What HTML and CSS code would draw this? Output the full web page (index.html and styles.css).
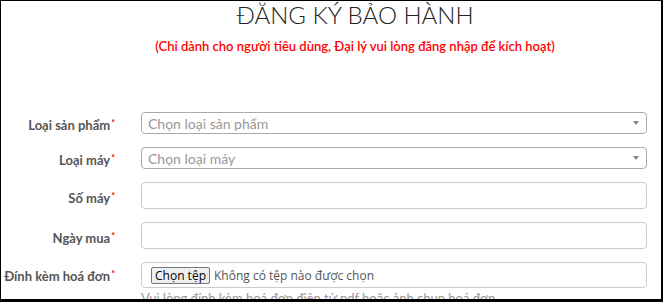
FILE: index.html
```html
<!DOCTYPE html>
<html lang="vi">
<head>
    <meta charset="UTF-8">
    <meta name="viewport" content="width=device-width, initial-scale=1.0">
    <title>Đăng ký bảo hành</title>
    <link rel="stylesheet" href="styles.css">
</head>
<body>
    <div class="frame">
        <!-- Tiêu đề -->
        <div class="header">
            <h1>ĐĂNG KÝ BẢO HÀNH</h1>
            <p class="note">(Chỉ dành cho người tiêu dùng, Đại lý vui lòng đăng nhập để kích hoạt)</p>
        </div>

        <!-- Form đăng ký -->
        <form class="warranty">
            <label class="field-label">Loại sản phẩm<span class="req">*</span></label>
            <div class="select-box">
                <span class="placeholder">Chọn loại sản phẩm</span>
                <span class="arrow"></span>
            </div>

            <label class="field-label">Loại máy<span class="req">*</span></label>
            <div class="select-box">
                <span class="placeholder">Chọn loại máy</span>
                <span class="arrow"></span>
            </div>

            <label class="field-label">Số máy<span class="req">*</span></label>
            <input type="text" class="text-input">

            <label class="field-label">Ngày mua<span class="req">*</span></label>
            <input type="text" class="text-input">

            <label class="field-label top">Đính kèm hoá đơn<span class="req">*</span></label>
            <div class="file-field">
                <div class="file-box">
                    <span class="file-btn">Chọn tệp</span>
                    <span class="file-name">Không có tệp nào được chọn</span>
                </div>
                <p class="help">Vui lòng đính kèm hoá đơn điện tử pdf hoặc ảnh chụp hoá đơn</p>
            </div>
        </form>
    </div>
</body>
</html>
```

FILE: styles.css
```css
body {
    margin: 0;
    padding: 0;
    background-color: #fff;
    font-family: Lato, "Noto Sans", sans-serif;
}
.frame {
    box-sizing: border-box;
    width: 663px;
    height: 302px;
    border: solid #000;
    border-width: 1px 2px 3px 1px;
    overflow: hidden;
}
.header {
    padding-left: 48px;
    text-align: center;
}
.header h1 {
    margin: 0;
    font-size: 24px;
    font-weight: 300;
    line-height: 28px;
    color: #222;
}
.note {
    margin: 9px 0 0;
    font-size: 13px;
    font-weight: 600;
    line-height: 16px;
    color: #ff0000;
}
.warranty {
    display: grid;
    grid-template-columns: 114px 1fr;
    column-gap: 26px;
    row-gap: 13px;
    margin-top: 58px;
    padding-right: 14px;
}
.field-label {
    text-align: right;
    font-size: 13px;
    font-weight: 700;
    color: #555;
    padding-top: 4px;
    align-self: center;
}
.field-label.top {
    align-self: start;
    padding-top: 6px;
}
.req {
    color: #e00;
    font-size: 9px;
    vertical-align: top;
    margin-left: 1px;
}
.select-box {
    box-sizing: border-box;
    height: 22px;
    border: 1px solid #aaa;
    border-radius: 4px;
    display: flex;
    align-items: center;
    justify-content: space-between;
    padding: 0 7px 0 6px;
}
.placeholder {
    font-size: 14px;
    color: #999;
}
.arrow {
    width: 0;
    height: 0;
    border-left: 3px solid transparent;
    border-right: 3px solid transparent;
    border-top: 4px solid #888;
}
.text-input {
    box-sizing: border-box;
    height: 27px;
    width: 100%;
    margin: 0;
    border: 1px solid #ccc;
    border-radius: 4px;
}
.file-box {
    box-sizing: border-box;
    height: 26px;
    border: 1px solid #ccc;
    border-radius: 4px;
    display: flex;
    align-items: center;
    padding-left: 9px;
    font-family: "Open Sans", sans-serif;
}
.file-btn {
    box-sizing: border-box;
    height: 17px;
    padding: 0 3px;
    border: 1px solid #767676;
    border-radius: 2px;
    background-color: #efefef;
    font-size: 12px;
    line-height: 15px;
    color: #000;
}
.file-name {
    margin-left: 4px;
    font-size: 12px;
    color: #555;
}
.help {
    margin: 2px 0 0;
    font-size: 13px;
    line-height: 16px;
    color: #999;
}
```
